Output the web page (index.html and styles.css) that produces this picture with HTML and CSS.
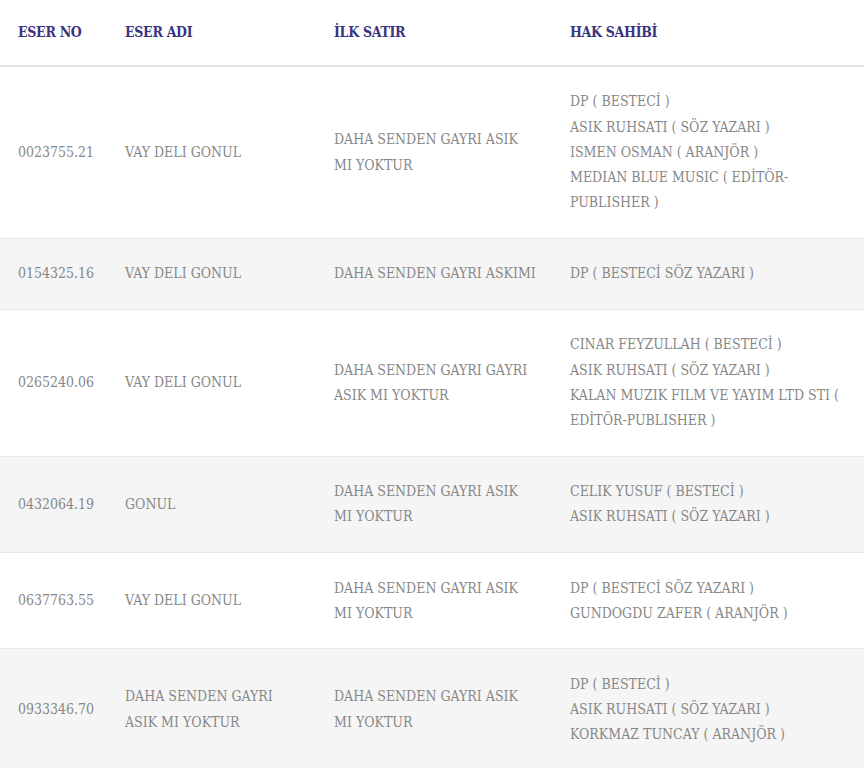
FILE: index.html
```html
<!DOCTYPE html>
<html lang="tr">
<head>
<meta charset="utf-8">
<title>Eserler</title>
<link rel="stylesheet" href="styles.css">
</head>
<body>
<table class="works">
  <colgroup>
    <col class="c-no">
    <col class="c-name">
    <col class="c-line">
    <col class="c-owner">
  </colgroup>
  <thead>
    <tr>
      <th>ESER NO</th>
      <th>ESER ADI</th>
      <th>İLK SATIR</th>
      <th>HAK SAHİBİ</th>
    </tr>
  </thead>
  <tbody>
    <tr>
      <td>0023755.21</td>
      <td>VAY DELI GONUL</td>
      <td>DAHA SENDEN GAYRI ASIK MI YOKTUR</td>
      <td>
        <div>DP ( BESTECİ )</div>
        <div>ASIK RUHSATI ( SÖZ YAZARI )</div>
        <div>ISMEN OSMAN ( ARANJÖR )</div>
        <div>MEDIAN BLUE MUSIC ( EDİTÖR-PUBLISHER )</div>
      </td>
    </tr>
    <tr>
      <td>0154325.16</td>
      <td>VAY DELI GONUL</td>
      <td>DAHA SENDEN GAYRI ASKIMI</td>
      <td><div>DP ( BESTECİ SÖZ YAZARI )</div></td>
    </tr>
    <tr>
      <td>0265240.06</td>
      <td>VAY DELI GONUL</td>
      <td>DAHA SENDEN GAYRI GAYRI ASIK MI YOKTUR</td>
      <td>
        <div>CINAR FEYZULLAH ( BESTECİ )</div>
        <div>ASIK RUHSATI ( SÖZ YAZARI )</div>
        <div>KALAN MUZIK FILM VE YAYIM LTD STI ( EDİTÖR-PUBLISHER )</div>
      </td>
    </tr>
    <tr>
      <td>0432064.19</td>
      <td>GONUL</td>
      <td>DAHA SENDEN GAYRI ASIK MI YOKTUR</td>
      <td>
        <div>CELIK YUSUF ( BESTECİ )</div>
        <div>ASIK RUHSATI ( SÖZ YAZARI )</div>
      </td>
    </tr>
    <tr>
      <td>0637763.55</td>
      <td>VAY DELI GONUL</td>
      <td>DAHA SENDEN GAYRI ASIK MI YOKTUR</td>
      <td>
        <div>DP ( BESTECİ SÖZ YAZARI )</div>
        <div>GUNDOGDU ZAFER ( ARANJÖR )</div>
      </td>
    </tr>
    <tr>
      <td>0933346.70</td>
      <td>DAHA SENDEN GAYRI ASIK MI YOKTUR</td>
      <td>DAHA SENDEN GAYRI ASIK MI YOKTUR</td>
      <td>
        <div>DP ( BESTECİ )</div>
        <div>ASIK RUHSATI ( SÖZ YAZARI )</div>
        <div>KORKMAZ TUNCAY ( ARANJÖR )</div>
      </td>
    </tr>
  </tbody>
</table>
</body>
</html>
```

FILE: styles.css
```css
html, body {
  margin: 0;
  padding: 0;
  background: #ffffff;
}

.works {
  width: 864px;
  border-collapse: collapse;
  table-layout: fixed;
  font-family: "DejaVu Serif Condensed", "DejaVu Serif", serif;
  font-stretch: condensed;
}

.c-no { width: 107px; }
.c-name { width: 209px; }
.c-line { width: 236px; }
.c-owner { width: 312px; }

.works th {
  text-align: left;
  font-size: 14px;
  font-weight: bold;
  color: #3b3480;
  line-height: 25px;
  padding: 20px 14px 20px 18px;
  border-bottom: 2px solid #e4e4e4;
  letter-spacing: -0.3px;
}

.works td {
  font-size: 14px;
  font-weight: normal;
  color: #878787;
  line-height: 25.25px;
  padding: 22.4px 14px 22.4px 18px;
  vertical-align: middle;
  border-bottom: 1px solid #e6e6e6;
}

.works tbody tr:nth-child(even) td {
  background: #f5f5f5;
}
```
